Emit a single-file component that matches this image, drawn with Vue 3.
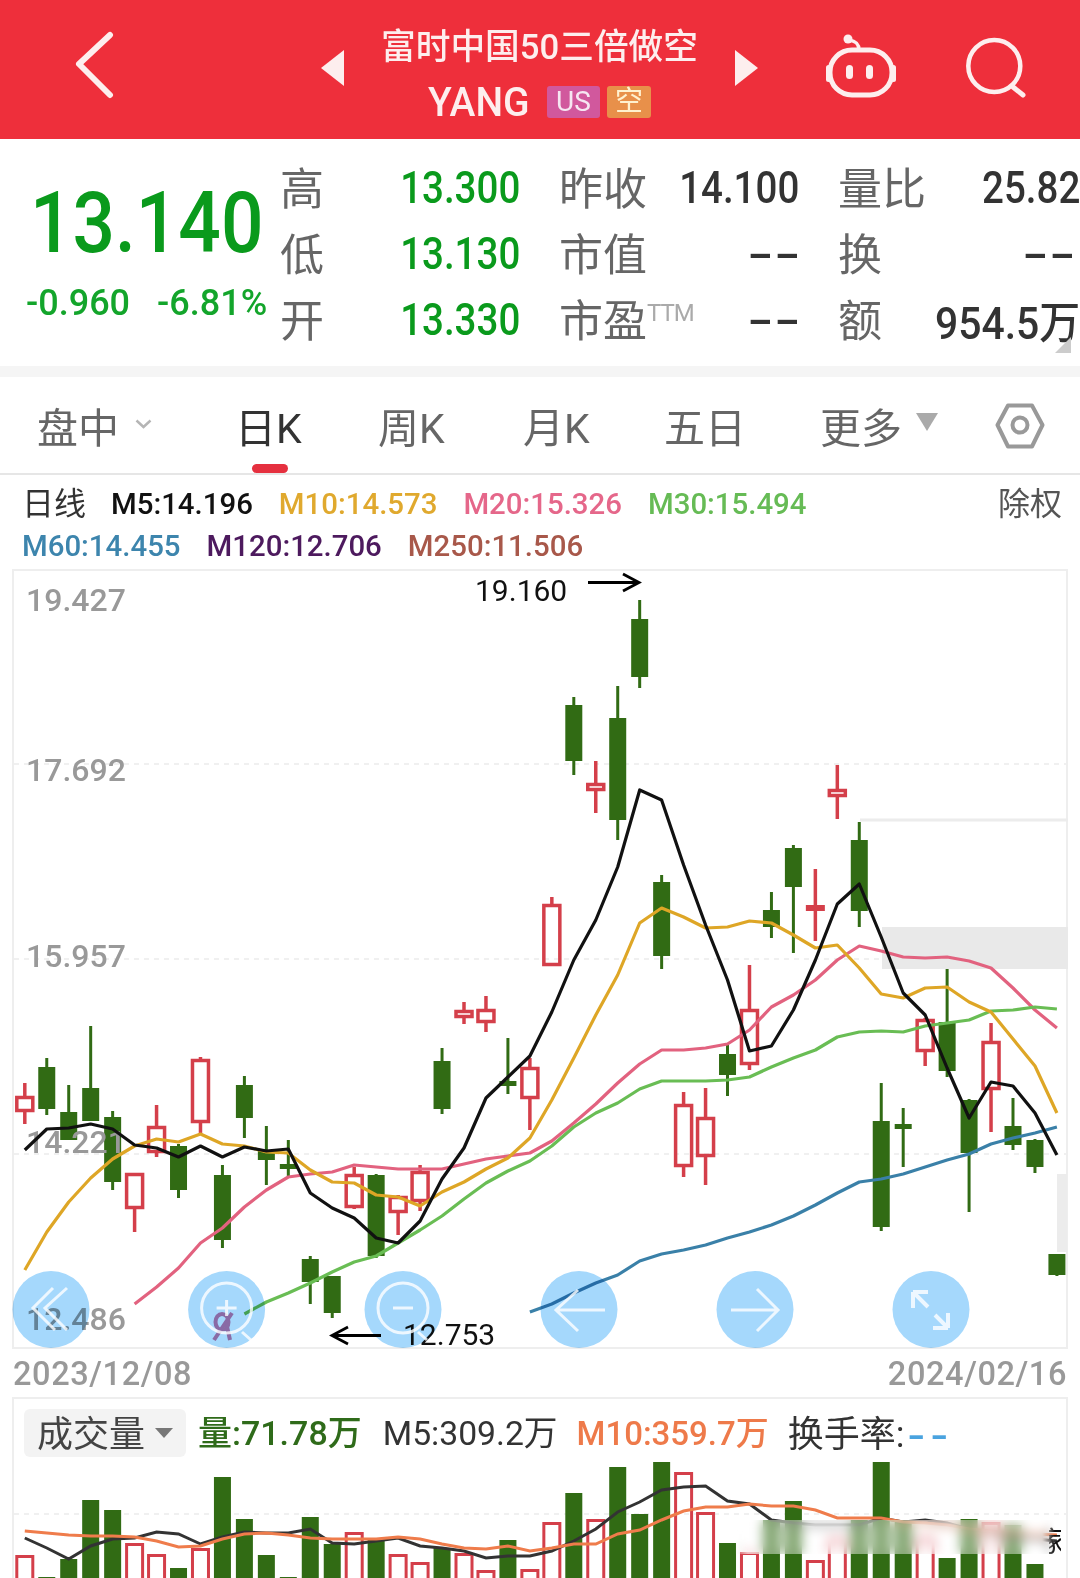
<script setup>
const GREEN = "#316b14";
const RED = "#d43f4a";

const xAt = (i) => 24.8 + 21.96 * i;

// type, high, low, body top, body bottom
const candles = [
  ["r", 1083, 1124, 1096, 1112], ["g", 1058, 1115, 1067, 1109], ["g", 1085, 1140, 1112, 1140], ["g", 1026, 1121, 1088, 1121],
  ["g", 1111, 1190, 1117, 1182], ["r", 1173, 1232, 1173, 1209], ["r", 1105, 1157, 1126, 1153], ["g", 1144, 1198, 1146, 1190],
  ["r", 1057, 1134, 1059, 1123], ["g", 1165, 1248, 1175, 1240], ["g", 1076, 1138, 1085, 1118], ["g", 1126, 1185, 1150, 1160],
  ["g", 1140, 1176, 1164, 1169], ["g", 1256, 1304, 1259, 1282], ["g", 1276, 1318, 1276, 1313], ["r", 1167, 1209, 1174, 1208],
  ["g", 1174, 1258, 1175, 1256], ["r", 1195, 1235, 1196, 1213], ["r", 1165, 1211, 1171, 1202], ["g", 1048, 1114, 1061, 1109],
  ["r", 1002, 1024, 1010, 1018], ["r", 996, 1032, 1009, 1023], ["g", 1038, 1094, 1081, 1086], ["r", 1058, 1130, 1067, 1099],
  ["r", 897, 966, 904, 966], ["g", 697, 775, 705, 761], ["r", 761, 813, 783, 791], ["g", 686, 840, 718, 820],
  ["g", 600, 688, 619, 677], ["g", 875, 969, 882, 956], ["r", 1092, 1177, 1104, 1167], ["r", 1088, 1185, 1117, 1157],
  ["g", 1045, 1096, 1054, 1075], ["r", 965, 1070, 1009, 1065], ["g", 892, 938, 910, 927], ["g", 845, 953, 848, 887],
  ["s", 869, 941, 905, 911], ["r", 765, 819, 789, 797], ["g", 822, 927, 840, 911], ["g", 1083, 1231, 1121, 1227],
  ["g", 1108, 1167, 1124, 1129], ["r", 1018, 1066, 1019, 1052], ["g", 969, 1077, 1022, 1071], ["g", 1099, 1212, 1100, 1153],
  ["r", 1023, 1132, 1041, 1090], ["g", 1098, 1150, 1126, 1145], ["g", 1139, 1173, 1140, 1167], ["g", 1254, 1276, 1254, 1275],
];

const ma5 = [1150, 1129, 1128, 1124, 1129, 1145, 1148, 1157, 1146, 1157, 1147, 1151, 1149, 1193, 1208, 1218, 1238, 1243, 1221, 1179, 1148, 1098, 1077, 1056, 1012, 960, 920, 867, 790, 800, 865, 925, 980, 1051, 1046, 1010, 960, 904, 884, 937, 993, 1015, 1068, 1118, 1082, 1086, 1113, 1155];
const ma10 = [1270, 1232, 1202, 1178, 1159, 1146, 1139, 1142, 1134, 1144, 1146, 1152, 1153, 1170, 1182, 1183, 1195, 1197, 1206, 1192, 1182, 1169, 1158, 1138, 1100, 1058, 1015, 975, 923, 908, 917, 928, 927, 921, 923, 935, 948, 945, 968, 994, 998, 988, 987, 1002, 1012, 1039, 1066, 1113];
const ma20 = [1304, 1287, 1268, 1243, 1228, 1207, 1190, 1177, 1174, 1172, 1165, 1167, 1169, 1169, 1169, 1164, 1159, 1156, 1153, 1141, 1123, 1104, 1083, 1064, 1050, 1050, 1048, 1044, 1030, 1007, 995, 980, 960, 946, 951, 957, 958, 957, 961, 968, 988, 1010, 1028];
const ma30 = [1314, 1302, 1293, 1283, 1272, 1262, 1256, 1243, 1230, 1216, 1199, 1183, 1171, 1161, 1146, 1127, 1113, 1103, 1089, 1081, 1081, 1081, 1080, 1077, 1067, 1058, 1050, 1037, 1032, 1031, 1032, 1026, 1023, 1020, 1011, 1010, 1007, 1009];
const ma60 = [1312, 1304, 1293, 1283, 1275, 1261, 1254, 1250, 1245, 1238, 1232, 1225, 1216, 1205, 1193, 1182, 1179, 1174, 1167, 1160, 1154, 1144, 1138, 1133, 1127];

const priceLines = [
  { color: "#e2627f", start: 5, ys: ma20 },
  { color: "#69bd54", start: 10, ys: ma30 },
  { color: "#3a80a8", start: 23, ys: ma60 },
  { color: "#dea626", start: 0, ys: ma10 },
  { color: "#111111", start: 0, ys: ma5 },
];

const volTops = [
  1555, 1577, 1559, 1500, 1510, 1543, 1554, 1568, 1548, 1477, 1519, 1555, 1577, 1517, 1544, 1532,
  1540, 1554, 1562, 1548, 1553, 1570, 1540, 1569, 1522, 1493, 1519, 1467, 1514, 1462, 1472, 1512,
  1543, 1552, 1520, 1501, 1560, 1538, 1520, 1462, 1520, 1537, 1558, 1519, 1522, 1525, 1564,
];

const volBlack = [1538, 1548, 1559, 1546, 1539, 1538, 1532, 1534, 1544, 1537, 1532, 1533, 1533, 1529, 1543, 1544, 1541, 1538, 1546, 1548, 1551, 1558, 1556, 1556, 1551, 1541, 1529, 1512, 1502, 1490, 1487, 1486, 1501, 1504, 1520, 1523, 1525, 1525, 1525, 1518, 1522, 1520, 1523, 1529, 1533, 1537, 1539, 1541];
const volOrange = [1531, 1533, 1535, 1536, 1536, 1537, 1541, 1547, 1546, 1539, 1534, 1533, 1535, 1538, 1539, 1539, 1539, 1537, 1539, 1544, 1548, 1549, 1546, 1551, 1548, 1544, 1544, 1534, 1530, 1520, 1511, 1507, 1507, 1504, 1506, 1506, 1510, 1518, 1518, 1518, 1522, 1523, 1525, 1529, 1531, 1533, 1534, 1535];

function linePoints(start, ys) {
  return ys.map((y, i) => `${xAt(start + i).toFixed(1)},${y}`).join(" ");
}

const yLabels = [
  { text: "19.427", y: 611 },
  { text: "17.692", y: 781 },
  { text: "15.957", y: 967 },
  { text: "14.221", y: 1153 },
  { text: "12.486", y: 1330 },
];

const buttons = [51, 226.6, 403, 579, 755, 931];

const stats = [
  { l1: "高", v1: "13.300", l2: "昨收", v2: "14.100", l3: "量比", v3: "25.82" },
  { l1: "低", v1: "13.130", l2: "市值", v2: "--", l3: "换", v3: "--" },
  { l1: "开", v1: "13.330", l2: "市盈", ttm: true, v2: "--", l3: "额", v3: "954.5万" },
];
</script>

<template>
  <div class="app">
    <header class="top">
      <svg class="back" width="40" height="70" viewBox="0 0 40 70">
        <path d="M36 5 5 34l31 31" fill="none" stroke="#fdeeee" stroke-width="6" stroke-linecap="round" stroke-linejoin="round" />
      </svg>
      <span class="tri tri-left"></span>
      <div class="title">
        <div class="name">富时中国50三倍做空</div>
        <div class="code-row">
          <span class="code">YANG</span>
          <span class="tag tag-us">US</span>
          <span class="tag tag-short">空</span>
        </div>
      </div>
      <span class="tri tri-right"></span>
      <svg class="robot" width="72" height="70" viewBox="0 0 72 70">
        <rect x="5" y="18" width="62" height="45" rx="22" fill="none" stroke="#fdeeee" stroke-width="5" />
        <rect x="1" y="33" width="5" height="17" rx="2.5" fill="#fdeeee" />
        <rect x="66" y="33" width="5" height="17" rx="2.5" fill="#fdeeee" />
        <rect x="21" y="33" width="7" height="14" rx="3.5" fill="#fdeeee" />
        <rect x="41" y="33" width="7" height="14" rx="3.5" fill="#fdeeee" />
        <path d="M34 18C34 11 30 9 24 8" fill="none" stroke="#fdeeee" stroke-width="3.5" stroke-linecap="round" />
        <circle cx="23" cy="7" r="4.5" fill="#fdeeee" />
      </svg>
      <svg class="search" width="64" height="64" viewBox="0 0 64 64">
        <circle cx="30.3" cy="31" r="26" fill="none" stroke="#fdeeee" stroke-width="4.500" />
        <path d="M49 52l10 8" fill="none" stroke="#fdeeee" stroke-width="5" stroke-linecap="round" />
      </svg>
    </header>

    <section class="quote">
      <div class="price-box">
        <div class="price">13.140</div>
        <div class="change">
          <span>-0.960</span>
          <span>-6.81%</span>
        </div>
      </div>
      <div class="stats">
        <template v-for="row in stats" :key="row.l1">
          <span class="label">{{ row.l1 }}</span>
          <span class="val up">{{ row.v1 }}</span>
          <span class="label">{{ row.l2 }}<sup v-if="row.ttm" class="ttm">TTM</sup></span>
          <span class="val" :class="{ dash: row.v2 === '--' }">{{ row.v2 }}</span>
          <span class="label">{{ row.l3 }}</span>
          <span class="val last" :class="{ dash: row.v3 === '--', wide: row.v3.endsWith('万') }">{{ row.v3 }}</span>
        </template>
      </div>
      <span class="corner"></span>
    </section>

    <div class="band"></div>

    <nav class="tabs">
      <div class="tab">
        盘中
        <svg class="chev" width="17" height="10" viewBox="0 0 17 10">
          <path d="M1.5 1.5 8.500 8l7-6.500" fill="none" stroke="#b5b5b5" stroke-width="2.500" />
        </svg>
      </div>
      <div class="tab active">日K<span class="bar"></span></div>
      <div class="tab">周K</div>
      <div class="tab">月K</div>
      <div class="tab">五日</div>
      <div class="tab">
        更多
        <span class="more"></span>
      </div>
      <svg class="hex" width="50" height="50" viewBox="0 0 50 50">
        <path d="M2.500 24 13 4.500h24L47.500 24 37 45.500H13Z" fill="none" stroke="#999" stroke-width="4" stroke-linejoin="round" />
        <circle cx="25" cy="24" r="7.500" fill="none" stroke="#999" stroke-width="4" />
      </svg>
    </nav>

    <div class="legend">
      <div class="legend-row">
        <span class="day">日线</span>
        <span class="c-black">M5:14.196</span>
        <span class="c-gold">M10:14.573</span>
        <span class="c-pink">M20:15.326</span>
        <span class="c-green">M30:15.494</span>
        <span class="adjust">除权</span>
      </div>
      <div class="legend-row second">
        <span class="c-blue">M60:14.455</span>
        <span class="c-purple">M120:12.706</span>
        <span class="c-brown">M250:11.506</span>
      </div>
    </div>

    <svg class="chart" width="1080" height="782" viewBox="0 568 1080 782">
      <rect x="13" y="570" width="1054" height="778" fill="#fff" stroke="#eeeeee" stroke-width="2" />
      <line v-for="y in [764, 959, 1154]" :key="y" x1="14" x2="1066" :y1="y" :y2="y" stroke="#ebebeb" stroke-width="1.500" stroke-dasharray="5 5" />
      <path d="M860 820H1068" stroke="#ececec" stroke-width="3" />
      <rect x="882" y="927" width="186" height="42" fill="#e9e9e9" />
      <rect x="1057" y="1174" width="10" height="78" fill="#ececec" />

      <g v-for="(c, i) in candles" :key="i">
        <template v-if="c[0] === 'g'">
          <line :x1="xAt(i)" :x2="xAt(i)" :y1="c[1]" :y2="c[2]" :stroke="GREEN" stroke-width="3" />
          <rect :x="xAt(i) - 8.500" :y="c[3]" width="17" :height="c[4] - c[3]" :fill="GREEN" />
        </template>
        <template v-else-if="c[0] === 's'">
          <line :x1="xAt(i)" :x2="xAt(i)" :y1="c[1]" :y2="c[2]" :stroke="RED" stroke-width="3.500" />
          <rect :x="xAt(i) - 9.500" :y="c[3]" width="19" :height="c[4] - c[3]" :fill="RED" />
        </template>
        <template v-else>
          <line :x1="xAt(i)" :x2="xAt(i)" :y1="c[1]" :y2="c[3]" :stroke="RED" stroke-width="3.500" />
          <line :x1="xAt(i)" :x2="xAt(i)" :y1="c[4]" :y2="c[2]" :stroke="RED" stroke-width="3.500" />
          <rect :x="xAt(i) - 8" :y="c[3] + 1.500" width="16" :height="c[4] - c[3] - 3" fill="none" :stroke="RED" stroke-width="3.500" />
        </template>
      </g>

      <text v-for="l in yLabels" :key="l.text" class="axis" x="26" :y="l.y">{{ l.text }}</text>

      <polyline
        v-for="l in priceLines"
        :key="l.color"
        :points="linePoints(l.start, l.ys)"
        fill="none"
        :stroke="l.color"
        stroke-width="3.200"
        stroke-linejoin="round"
      />

      <text class="mark" x="475" y="601">19.160</text>
      <path d="M588 582.500H638M623 574l16 8.500-16 8.500" fill="none" stroke="#000" stroke-width="2.800" />
      <text class="mark" x="403" y="1345">12.753</text>
      <path d="M381 1335.500H332M348 1327l-16 8.500 16 8.500" fill="none" stroke="#000" stroke-width="2.800" />

      <path d="M232 1313 214 1340M226 1322l4 18" fill="none" stroke="#d47ea7" stroke-width="4" />
      <ellipse cx="222" cy="1322" rx="6.500" ry="8" fill="none" stroke="#d47ea7" stroke-width="4" />

      <circle v-for="x in buttons" :key="x" class="btn" :cx="x" cy="1309.500" r="38.500" />

      <g fill="none" stroke="#fff" stroke-opacity="0.8" stroke-width="3">
        <path d="M53 1288 33 1308 55 1330M67 1288 45 1308 67 1330" />
        <circle cx="226.600" cy="1308" r="25" />
        <path d="M216.600 1308h20M226.600 1300v16M242 1332l9 8" />
        <circle cx="403" cy="1308" r="25" />
        <path d="M393 1308h20M418 1332l9 8" />
        <path d="M605 1310H556M578 1290l-22 20 22 21" />
        <path d="M731 1310H778M757 1289l21 21-21 21" />
        <path d="M913 1292h15M913 1292v16M914 1293l14 14M948 1328h-15M948 1328v-15M947 1327l-12-12" stroke-width="4" />
      </g>
    </svg>

    <div class="dates">
      <span>2023/12/08</span>
      <span>2024/02/16</span>
    </div>

    <section class="volume">
      <div class="vol-head">
        <div class="pill">
          <span class="lift">成交量</span>
          <span class="pill-arrow"></span>
        </div>
        <span class="lift v-green">量:71.78万</span>
        <span class="lift v-dark">M5:309.2万</span>
        <span class="lift v-orange">M10:359.7万</span>
        <span class="lift v-dark rate">换手率:<span class="v-blue">--</span></span>
      </div>

      <svg class="vol-chart" width="1080" height="181" viewBox="0 1397 1080 181">
        <defs>
          <clipPath id="cut"><rect x="1049" y="1525" width="12" height="32" /></clipPath>
        </defs>
        <rect x="13" y="1398" width="1054" height="190" fill="none" stroke="#eeeeee" stroke-width="2" />
        <line x1="14" x2="1066" y1="1514" y2="1514" stroke="#ebebeb" stroke-width="1.500" stroke-dasharray="5 5" />
        <g v-for="(top, i) in volTops" :key="i">
          <rect v-if="candles[i][0] === 'g'" :x="xAt(i) - 8.500" :y="top" width="17" :height="1590 - top" :fill="GREEN" />
          <rect v-else :x="xAt(i) - 8" :y="top + 1.500" width="16" :height="1590 - top" fill="none" :stroke="RED" stroke-width="3" />
        </g>
        <polyline :points="linePoints(0, volBlack)" fill="none" stroke="#333" stroke-width="3" />
        <polyline :points="linePoints(0, volOrange)" fill="none" stroke="#ef7c4b" stroke-width="3" />
        <text class="cut-text" x="1038" y="1552" clip-path="url(#cut)">家</text>
      </svg>

      <div class="smear"></div>
    </section>
  </div>
</template>

<style scoped>
.app {
  width: 1080px;
  height: 1578px;
  overflow: hidden;
  background: #fff;
  font-family: Roboto, "Noto Sans CJK SC", sans-serif;
  color: #333;
}

.top {
  height: 139px;
  background: #ee2f3b;
  color: #fdeeee;
  display: flex;
  align-items: center;
  padding-left: 74px;
}

.back {
  margin-top: -10px;
  margin-right: 207px;
}

.tri {
  width: 0;
  height: 0;
  border-top: 18px solid transparent;
  border-bottom: 18px solid transparent;
  margin-top: -4px;
}

.tri-left {
  border-right: 23px solid #fdeeee;
}

.tri-right {
  border-left: 23px solid #fdeeee;
}

.title {
  width: 391px;
  display: flex;
  flex-direction: column;
  align-items: center;
  margin-top: 6px;
}

.name {
  font-size: 34.700px;
  font-weight: 500;
  line-height: 44px;
  white-space: nowrap;
}

.code-row {
  display: flex;
  align-items: center;
  margin-top: 15px;
  height: 36px;
}

.code {
  font-size: 41px;
  font-weight: 500;
  margin-right: 15px;
  width: 104px;
  white-space: nowrap;
  transform: scaleX(0.95);
  transform-origin: left;
}

.tag {
  height: 32px;
  line-height: 32px;
  font-size: 28px;
  text-align: center;
  border-radius: 3px;
}

.tag-us {
  width: 53px;
  background: #d1589d;
  color: #f6e6f2;
  margin-right: 7px;
}

.tag-short {
  width: 44px;
  background: #e8904a;
  color: #fff1cf;
}

.robot {
  margin-left: 67px;
  margin-top: -5px;
}

.search {
  margin-left: 67px;
  margin-top: -5px;
}

.quote {
  height: 227px;
  display: flex;
  position: relative;
  overflow: hidden;
}

.price-box {
  width: 281px;
  flex: none;
  padding-top: 41px;
}

.price {
  font-size: 86px;
  font-weight: 500;
  line-height: 86px;
  color: #0a9a1c;
  margin-left: 30px;
  white-space: nowrap;
  transform: scaleX(0.87);
  transform-origin: left;
}

.change {
  display: flex;
  gap: 27px;
  margin: 17px 0 0 26px;
  font-size: 36px;
  font-weight: 500;
  line-height: 40px;
  color: #13a52b;
  white-space: nowrap;
}

.stats {
  flex: 1;
  display: grid;
  grid-template-columns: 41px 158px 86px 113px 85px 116px;
  grid-auto-rows: 66px;
  column-gap: 40px;
  padding-top: 16px;
  align-items: center;
}

.label {
  font-size: 44px;
  color: #666;
  white-space: nowrap;
  margin: -5px 0 0 -1px;
}

.ttm {
  font-size: 24px;
  color: #aaa;
  vertical-align: 16px;
  line-height: 0;
  letter-spacing: -1px;
}

.val {
  justify-self: end;
  font-size: 44px;
  font-weight: 500;
  color: #333;
  white-space: nowrap;
  transform: scaleX(0.875);
  transform-origin: right;
}

.val.up {
  color: #0a9a1c;
}

.val.dash {
  transform: translateX(3px) scaleX(1.7);
  letter-spacing: 1px;
}

.val.last.dash {
  transform: translateX(-3px) scaleX(1.7);
}

.val.wide {
  transform: scaleX(0.93);
}

.corner {
  position: absolute;
  right: 9px;
  bottom: 13px;
  width: 0;
  height: 0;
  border-bottom: 16px solid #ccc;
  border-left: 16px solid transparent;
}

.band {
  height: 11px;
  background: #f5f5f5;
}

.tabs {
  height: 98px;
  box-sizing: border-box;
  border-bottom: 2px solid #e6e6e6;
  padding-left: 37px;
  display: grid;
  grid-template-columns: 198px 143px 145px 141px 156px 175px auto;
  align-items: center;
}

.tab {
  position: relative;
  display: flex;
  align-items: center;
  height: 96px;
  font-size: 41px;
  color: #666;
  white-space: nowrap;
}

.tab.active {
  color: #333;
}

.bar {
  position: absolute;
  left: 17px;
  bottom: 0;
  width: 36px;
  height: 9px;
  border-radius: 5px;
  background: #e5303f;
}

.chev {
  margin-left: 16px;
  margin-top: -2px;
}

.more {
  margin-left: 14px;
  margin-top: -6px;
  width: 0;
  height: 0;
  border-left: 11px solid transparent;
  border-right: 11px solid transparent;
  border-top: 18px solid #aaa;
}

.hex {
  margin-top: 2px;
}

.legend {
  height: 93px;
  box-sizing: border-box;
  padding-top: 9px;
}

.legend-row {
  display: flex;
  gap: 26px;
  height: 41px;
  line-height: 41px;
  padding-left: 22px;
  font-size: 29.400px;
  font-weight: 500;
  white-space: nowrap;
}

.legend-row.second {
  margin-top: 1px;
}

.day {
  width: 63px;
  font-size: 32px;
  font-weight: 400;
  color: #333;
}

.adjust {
  margin-left: auto;
  margin-right: 18px;
  font-size: 32px;
  font-weight: 400;
  color: #555;
}

.c-black { color: #111; }
.c-gold { color: #e0a92e; }
.c-pink { color: #e5678a; }
.c-green { color: #66bb55; }
.c-blue { color: #3d85ad; }
.c-purple { color: #4d1a5e; }
.c-brown { color: #a8584a; }

.chart,
.vol-chart {
  display: block;
  overflow: visible;
}

.axis {
  font-size: 32px;
  font-weight: 500;
  fill: #999;
}

.mark {
  font-size: 30px;
  fill: #111;
}

.btn {
  fill: #a5d8fc;
  mix-blend-mode: multiply;
}

.dates {
  height: 47px;
  display: flex;
  justify-content: space-between;
  align-items: center;
  padding: 0 13px;
  font-size: 32.500px;
  font-weight: 500;
  letter-spacing: 0.6px;
  color: #999;
}

.volume {
  position: relative;
  height: 181px;
  overflow: hidden;
}

.vol-chart {
  position: absolute;
  inset: 0;
}

.vol-head {
  position: relative;
  z-index: 1;
  display: flex;
  align-items: center;
  padding: 12px 0 0 24px;
  font-size: 34px;
  white-space: nowrap;
}

.lift {
  margin-top: -5px;
}

.pill {
  width: 162px;
  height: 48px;
  box-sizing: border-box;
  padding-left: 13px;
  margin-right: 12px;
  display: flex;
  align-items: center;
  background: #f3f3f3;
  border-radius: 6px;
  font-size: 36px;
  color: #444;
}

.pill-arrow {
  margin-left: 10px;
  width: 0;
  height: 0;
  border-left: 9px solid transparent;
  border-right: 9px solid transparent;
  border-top: 10px solid #777;
}

.v-green { color: #2f6b1a; font-weight: 500; margin-right: 21px; }
.v-dark { color: #333; font-size: 33.700px; }
.v-orange { color: #ee7a4a; font-size: 33px; font-weight: 500; margin-left: 19px; margin-right: 19px; }
.rate { font-size: 36px; }
.v-blue {
  display: inline-block;
  margin-left: 2px;
  color: #4aa3df;
  font-size: 34px;
  letter-spacing: 3px;
  font-weight: 700;
  transform: scaleX(1.4);
  transform-origin: left;
}

.cut-text {
  font-size: 28px;
  fill: #111;
}

.smear {
  position: absolute;
  left: 735px;
  top: 123px;
  width: 320px;
  height: 34px;
  background: rgba(255, 255, 255, 0.4);
  backdrop-filter: blur(6px);
  mask-image: linear-gradient(to right, transparent, #000 4%, #000 96%, transparent);
}
</style>

<style>
html,
body {
  margin: 0;
  background: #fff;
}
</style>
